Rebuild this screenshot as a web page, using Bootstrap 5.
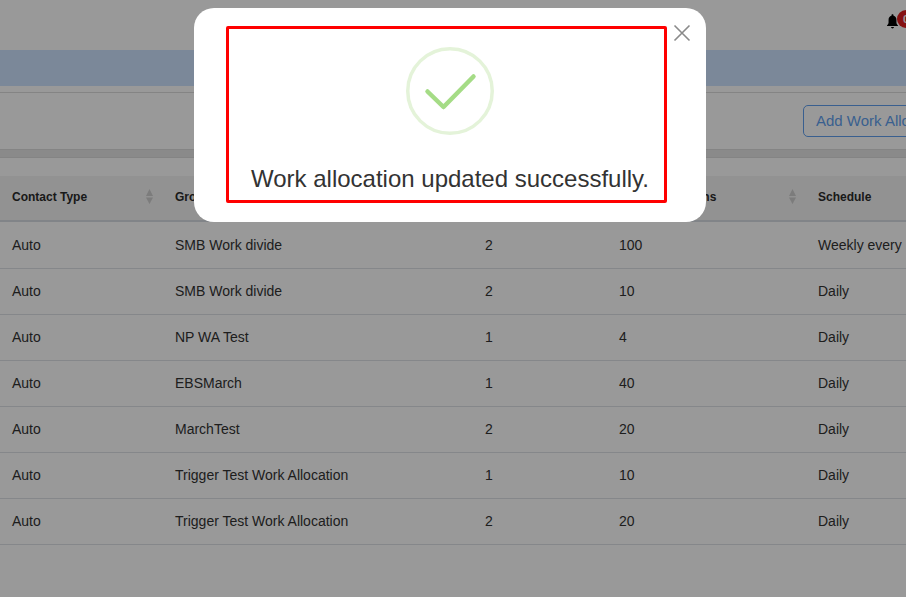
<!DOCTYPE html>
<html lang="en">
<head>
  <meta charset="UTF-8"/>
  <title>Work Allocation</title>
  <meta name="viewport" content="width=device-width, initial-scale=1"/>
  <link href="https://cdn.jsdelivr.net/npm/bootstrap@5.3.0/dist/css/bootstrap.min.css" rel="stylesheet"/>
  <style>
    html, body { height:100%; overflow:hidden; }
    body { font-family:"Liberation Sans", Arial, sans-serif; font-size:14px; color:#333; background:#fff; }
    .page-wrap { width:1100px; }
    .top-bar { height:50px; background:#fff; padding-left:887px; padding-top:10px; }
    .bell-wrap { width:40px; height:20px; }
    .bell-count { width:18px; height:18px; border-radius:50%; background:#e01f1f; color:#fff; font-size:11px; font-weight:700; line-height:18px; text-align:center; margin-left:-1px; }
    .bell-icon { margin-top:4px; }
    .blue-band { height:36px; background:#cde3ff; }
    .thin-gap { height:7px; border-bottom:1px solid #dcdcdc; background:#fff; }
    .action-row { height:56px; padding-left:803px; padding-top:12px; background:#fff; }
    .add-btn { width:200px; height:32px; padding:0 0 0 12px; text-align:left; font-size:15px; line-height:30px; color:#5f9fee; border:1px solid #5f9fee; border-radius:5px; background:#fff; }
    .grey-strip { height:9px; background:#e6e6e6; border-top:1px solid #dcdcdc; border-bottom:1px solid #dcdcdc; }
    .space-strip { height:18px; background:#fff; }
    .alloc-table { width:1100px; table-layout:fixed; margin:0; color:#333; }
    .alloc-table th, .alloc-table td { padding:0 12px; vertical-align:middle; }
    .alloc-table thead th { height:45px; padding-bottom:2px; background:#f3f3f3; font-size:12px; font-weight:700; border-bottom:2px solid #d8dde3; position:relative; color:#2b2b2b; }
    .alloc-table tbody td { height:46px; border-bottom:1px solid #dee2e6; font-size:14px; }
    .alloc-table tbody tr:first-child td { height:47px; padding-top:1px; }
    .sort-arrows { display:block; position:absolute; right:9px; top:12px; width:9px; height:17px; }
    .sweet-back { position:fixed; inset:0; background:rgba(0,0,0,.4); }
    .sweet-box { position:fixed; left:194px; top:8px; width:512px; height:214px; background:#fff; border-radius:20px; }
    .red-box { position:absolute; left:32px; top:18px; width:441px; height:177px; border:3px solid #f00; border-radius:2px; }
    .tick-ring { position:absolute; left:177px; top:18px; width:88px; height:88px; }
    .done-msg { position:absolute; left:7px; right:0; top:135px; text-align:center; font-size:24px; line-height:30px; color:#333; white-space:nowrap; }
    .shut-x { position:absolute; left:479px; top:14px; width:18px; height:18px; padding:0; border:0; background:none; display:block; }
  </style>
</head>
<body>
  <div class="page-wrap">
    <!-- Header -->
    <div class="top-bar">
      <div class="bell-wrap d-flex align-items-start">
        <svg width="11" height="15" viewBox="0 0 12 16" class="bell-icon flex-shrink-0"><path fill="#000" d="M6 0c.7 0 1.100.5 1.100 1.100v.6C9.200 2.200 10.300 3.900 10.300 6v3c0 1.300.6 2.200 1.700 3.300v.7H0v-.7C1.100 11.200 1.700 10.300 1.700 9V6c0-2.100 1.100-3.800 3.200-4.300v-.6C4.900.5 5.300 0 6 0zM4.400 14h3.200a1.600 1.600 0 0 1-3.200 0z"/></svg>
        <span class="bell-count flex-shrink-0">0</span>
      </div>
    </div>
    <div class="blue-band"></div>
    <div class="thin-gap"></div>
    <div class="action-row">
      <button type="button" class="btn add-btn">Add Work Allocation</button>
    </div>
    <div class="grey-strip"></div>
    <div class="space-strip"></div>

    <!-- Allocation list -->
    <table class="table alloc-table">
      <colgroup>
        <col style="width:163px"/>
        <col style="width:310px"/>
        <col style="width:134px"/>
        <col style="width:199px"/>
        <col style="width:294px"/>
      </colgroup>
      <thead>
        <tr>
          <th>Contact Type<svg class="sort-arrows" viewBox="0 0 9 17"><path fill="#cfcfcf" d="M4.500 1 8 8H1zM1 9.500h7L4.500 16z"/></svg></th>
          <th>Group Name</th>
          <th>Level</th>
          <th>Work Allocations<svg class="sort-arrows" viewBox="0 0 9 17"><path fill="#cfcfcf" d="M4.500 1 8 8H1zM1 9.500h7L4.500 16z"/></svg></th>
          <th>Schedule</th>
        </tr>
      </thead>
      <tbody>
        <tr><td>Auto</td><td>SMB Work divide</td><td>2</td><td>100</td><td>Weekly every Monday</td></tr>
        <tr><td>Auto</td><td>SMB Work divide</td><td>2</td><td>10</td><td>Daily</td></tr>
        <tr><td>Auto</td><td>NP WA Test</td><td>1</td><td>4</td><td>Daily</td></tr>
        <tr><td>Auto</td><td>EBSMarch</td><td>1</td><td>40</td><td>Daily</td></tr>
        <tr><td>Auto</td><td>MarchTest</td><td>2</td><td>20</td><td>Daily</td></tr>
        <tr><td>Auto</td><td>Trigger Test Work Allocation</td><td>1</td><td>10</td><td>Daily</td></tr>
        <tr><td>Auto</td><td>Trigger Test Work Allocation</td><td>2</td><td>20</td><td>Daily</td></tr>
      </tbody>
    </table>
  </div>

  <!-- Success popup -->
  <div class="sweet-back"></div>
  <div class="sweet-box">
    <div class="red-box">
      <svg class="tick-ring" viewBox="0 0 88 88">
        <circle cx="44" cy="44" r="42.250" fill="none" stroke="#e4f3d9" stroke-width="3.500"/>
        <path d="M21.500 44.500 37.500 60 67.500 29.500" fill="none" stroke="#a5dc86" stroke-width="4.500" stroke-linecap="round" stroke-linejoin="round"/>
      </svg>
      <div class="done-msg">Work allocation updated successfully.</div>
    </div>
    <button type="button" class="shut-x" aria-label="Close">
      <svg width="18" height="18" viewBox="0 0 18 18"><path d="M1.500 1.500 16.500 16.500M16.500 1.500 1.500 16.500" stroke="#8a8a8a" stroke-width="1.600" fill="none"/></svg>
    </button>
  </div>
  <script src="https://cdn.jsdelivr.net/npm/bootstrap@5.3.0/dist/js/bootstrap.bundle.min.js"></script>
</body>
</html>
